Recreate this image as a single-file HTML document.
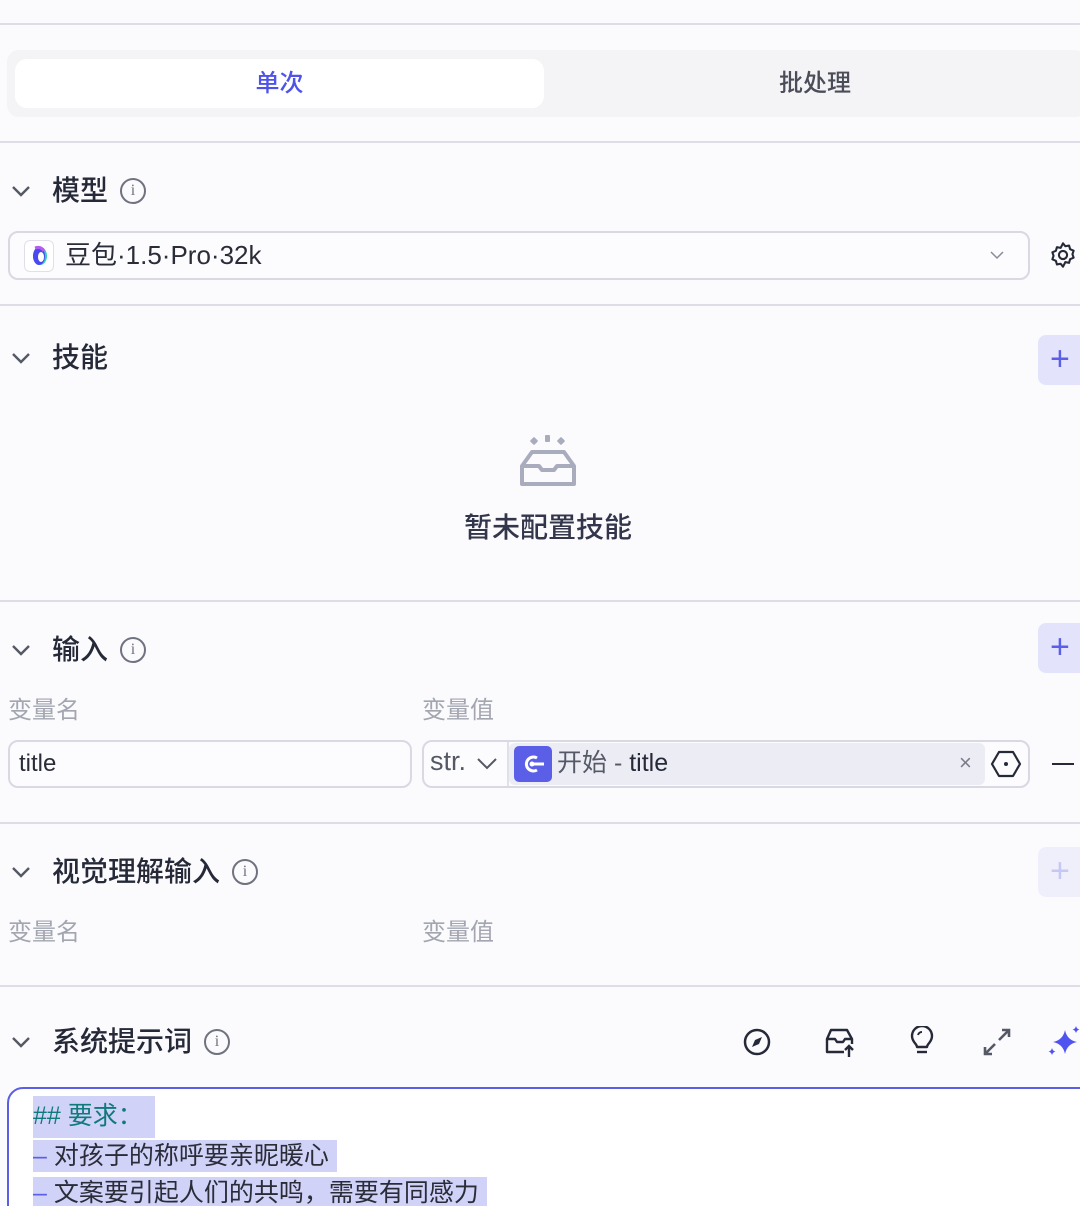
<!DOCTYPE html><html><head><meta charset="utf-8"><style>
*{margin:0;padding:0;box-sizing:border-box}
html,body{width:1080px;height:1206px;overflow:hidden}
body{background:#fbfbfe;font-family:"Liberation Sans","Noto Sans CJK SC",sans-serif;color:#1f2233;position:relative}
.a{position:absolute}
.hr{position:absolute;left:0;width:1080px;height:2px;background:#dcdde6}
.h{position:absolute;left:12px;font-size:28px;font-weight:500;color:#262a38;display:flex;align-items:center;gap:10px;line-height:1}
.info{width:26px;height:26px;border:2px solid #70737f;border-radius:50%;font-size:16px;display:inline-flex;align-items:center;justify-content:center;color:#70737f;font-family:"Liberation Serif",serif;margin-left:2px}
.lbl{position:absolute;font-size:24px;color:#a3a6b0}
.plus{position:absolute;left:1038px;width:50px;height:50px;background:#e3e4fb;border-radius:8px;color:#5b5fe8;font-size:34px;line-height:48px;padding-left:12px;font-weight:300}
.hl{background:#d0d2f8}
</style></head><body>
<div class="hr" style="top:23px"></div>
<div class="a" style="left:7px;top:50px;width:1080px;height:67px;background:#f4f4f6;border-radius:12px"></div>
<div class="a" style="left:15px;top:59px;width:529px;height:49px;background:#fff;border-radius:12px;text-align:center;line-height:49px;font-size:24px;color:#4f54e8;font-weight:500">单次</div>
<div class="a" style="left:545px;top:59px;width:540px;height:49px;text-align:center;line-height:49px;font-size:24px;color:#4b4e58;font-weight:500">批处理</div>
<div class="hr" style="top:141px"></div>

<svg class="a" style="left:10px;top:183px" width="22" height="16"><path d="M3 4l8 8 8-8" stroke="#555966" stroke-width="2.4" fill="none"/></svg>
<div class="h" style="left:52px;top:177px">模型<span class="info">i</span></div>
<div class="a" style="left:8px;top:231px;width:1022px;height:49px;border:2px solid #d8d9e2;border-radius:10px;background:#fcfcfe"></div>
<div class="a" style="left:24px;top:240px;width:30px;height:32px;border:1.5px solid #e0e0ea;border-radius:6px;background:#fff"></div>
<svg class="a" style="left:30px;top:245px" width="20" height="22"><ellipse cx="10" cy="11" rx="7" ry="9" fill="#2fd1b5"/><ellipse cx="9" cy="11" rx="6" ry="9" fill="#4b48f0"/><ellipse cx="11" cy="12" rx="3" ry="5" fill="#fff"/><path d="M5 3q6-2 9 3" stroke="#b35cf0" stroke-width="3" fill="none"/></svg>
<div class="a" style="left:65px;top:239px;font-size:26px;line-height:32px;color:#2a2d38">豆包·1.5·Pro·32k</div>
<svg class="a" style="left:988px;top:249px" width="18" height="12"><path d="M3 3l6 6 6-6" stroke="#8a8d99" stroke-width="1.5" fill="none"/></svg>
<svg class="a" style="left:1049px;top:241px" width="28" height="28" viewBox="0 0 24 24"><path d="M12 2l2 2.5 3.2-.6.9 3.1 3 1.3-1 3 1 3-3 1.3-.9 3.1-3.2-.6L12 22l-2-2.5-3.2.6-.9-3.1-3-1.3 1-3-1-3 3-1.3.9-3.1 3.2.6z" fill="none" stroke="#262a38" stroke-width="1.8" stroke-linejoin="round"/><circle cx="12" cy="12" r="3.5" fill="none" stroke="#262a38" stroke-width="1.8"/></svg>
<div class="hr" style="top:304px"></div>

<svg class="a" style="left:10px;top:350px" width="22" height="16"><path d="M3 4l8 8 8-8" stroke="#555966" stroke-width="2.4" fill="none"/></svg>
<div class="h" style="left:52px;top:344px">技能</div>
<div class="plus" style="top:335px">+</div>
<svg class="a" style="left:518px;top:434px" width="60" height="56"><g fill="#a9acbd"><rect x="27" y="1" width="5" height="7" rx="1"/><rect x="13" y="4" width="6" height="6" rx="1" transform="rotate(45 16 7)"/><rect x="40" y="4" width="6" height="6" rx="1" transform="rotate(45 43 7)"/></g><path d="M14 18h32l10 14v18H4V32z M4 32h17l3 4h12l3-4h17" fill="none" stroke="#a9acbd" stroke-width="4" stroke-linejoin="round"/></svg>
<div class="a" style="left:0;width:1096px;top:506px;text-align:center;font-size:28px;color:#33364a;font-weight:500">暂未配置技能</div>
<div class="hr" style="top:600px"></div>

<svg class="a" style="left:10px;top:642px" width="22" height="16"><path d="M3 4l8 8 8-8" stroke="#555966" stroke-width="2.4" fill="none"/></svg>
<div class="h" style="left:52px;top:636px">输入<span class="info">i</span></div>
<div class="plus" style="top:623px">+</div>
<div class="lbl" style="left:8px;top:690px">变量名</div>
<div class="lbl" style="left:422px;top:690px">变量值</div>
<div class="a" style="left:8px;top:740px;width:404px;height:48px;border:2px solid #d8d9e2;border-radius:10px;background:#fcfcfe;font-size:24px;line-height:44px;padding-left:9px;color:#2a2d38">title</div>
<div class="a" style="left:422px;top:740px;width:608px;height:48px;border:2px solid #d8d9e2;border-radius:10px;background:#fcfcfe"></div>
<div class="a" style="left:430px;top:746px;font-size:27px;color:#555966">str.</div>
<svg class="a" style="left:476px;top:757px" width="22" height="14"><path d="M2 2l9 9 9-9" stroke="#555966" stroke-width="2" fill="none"/></svg>
<div class="a" style="left:507px;top:742px;width:2px;height:44px;background:#e0e1e8"></div>
<div class="a" style="left:509px;top:743px;width:476px;height:42px;background:#ececf5;border-radius:6px"></div>
<div class="a" style="left:514px;top:746px;width:38px;height:36px;background:#5b5fe8;border-radius:5px"></div>
<svg class="a" style="left:518px;top:750px" width="30" height="28"><path d="M19 8a7 7 0 1 0 0 12" stroke="#fff" stroke-width="3" fill="none"/><circle cx="14" cy="14" r="2.5" fill="#fff"/><path d="M14 14h12" stroke="#fff" stroke-width="3"/></svg>
<div class="a" style="left:557px;top:747px;font-size:25px;line-height:32px;color:#555966">开始 - <span style="color:#262a38">title</span></div>
<div class="a" style="left:959px;top:750px;font-size:22px;color:#7a7d88">×</div>
<svg class="a" style="left:990px;top:749px" width="32" height="30"><path d="M9 3h14l7 12-7 12H9L2 15z" fill="none" stroke="#262a38" stroke-width="2.2" stroke-linejoin="round"/><circle cx="16" cy="15" r="2" fill="#262a38"/></svg>
<div class="a" style="left:1052px;top:763px;width:22px;height:2px;background:#262a38"></div>
<div class="hr" style="top:822px"></div>

<svg class="a" style="left:10px;top:864px" width="22" height="16"><path d="M3 4l8 8 8-8" stroke="#555966" stroke-width="2.4" fill="none"/></svg>
<div class="h" style="left:52px;top:858px">视觉理解输入<span class="info">i</span></div>
<div class="plus" style="top:847px;background:#eeeffb;color:#c5c7f5">+</div>
<div class="lbl" style="left:8px;top:912px">变量名</div>
<div class="lbl" style="left:422px;top:912px">变量值</div>
<div class="hr" style="top:985px"></div>

<svg class="a" style="left:10px;top:1034px" width="22" height="16"><path d="M3 4l8 8 8-8" stroke="#555966" stroke-width="2.4" fill="none"/></svg>
<div class="h" style="left:52px;top:1028px">系统提示词<span class="info">i</span></div>
<svg class="a" style="left:742px;top:1027px" width="30" height="30"><circle cx="15" cy="15" r="12" fill="none" stroke="#262a38" stroke-width="2.5"/><path d="M20 10l-7 3-3 7 7-3z" fill="#262a38"/></svg>
<svg class="a" style="left:824px;top:1026px" width="32" height="32"><path d="M7 4h16l5 9v13H3V13z M3 13h8l2 3h6l2-3h7" fill="none" stroke="#262a38" stroke-width="2.4" stroke-linejoin="round"/><rect x="20" y="18" width="12" height="14" fill="#fbfbfe"/><path d="M25 31V20m-4 4l4-4 4 4" stroke="#262a38" stroke-width="2.4" fill="none"/></svg>
<svg class="a" style="left:908px;top:1026px" width="28" height="32"><path d="M9 21c0-3-5-5-5-11a10 10 0 0 1 20 0c0 6-5 8-5 11z" fill="none" stroke="#262a38" stroke-width="2.4" stroke-linejoin="round"/><path d="M9 26h10" stroke="#262a38" stroke-width="2.4"/><path d="M10 9a4 4 0 0 1 4-3" stroke="#262a38" stroke-width="2" fill="none"/></svg>
<svg class="a" style="left:982px;top:1027px" width="30" height="30"><path d="M17 13l10-10m-7 0h7v7 M13 17L3 27m0-7v7h7" stroke="#555966" stroke-width="2.6" fill="none"/></svg>
<svg class="a" style="left:1047px;top:1026px" width="34" height="34"><path d="M18 4q2 10 12 12-10 2-12 12-2-10-12-12 10-2 12-12z" fill="#4f54f0"/><path d="M29 0q.8 3.2 3.5 3.5-2.7.8-3.5 3.5-.8-2.7-3.5-3.5 2.7-.3 3.5-3.5z M5 22q.8 3 3.5 3.5-2.7.7-3.5 3.5-.7-2.8-3.5-3.5 2.8-.5 3.5-3.5z" fill="#4f54f0"/></svg>
<div class="a" style="left:7px;top:1087px;width:1090px;height:140px;border:2.5px solid #5b5fe8;border-radius:16px;background:#fff"></div>
<div class="a" style="left:33px;top:1096px;font-size:25px;line-height:37.5px">
<div><span class="hl" style="color:#107a7a;padding:2px 4px 2px 0;display:inline-block;width:122px">## 要求：</span></div>
<div><span class="hl" style="padding:2px 8px 2px 0"><span style="color:#5b5fe8">–</span> <span style="color:#2a2d38">对孩子的称呼要亲昵暖心</span></span></div>
<div><span class="hl" style="padding:2px 8px 2px 0"><span style="color:#5b5fe8">–</span> <span style="color:#2a2d38">文案要引起人们的共鸣，需要有同感力</span></span></div>
</div>
</body></html>
